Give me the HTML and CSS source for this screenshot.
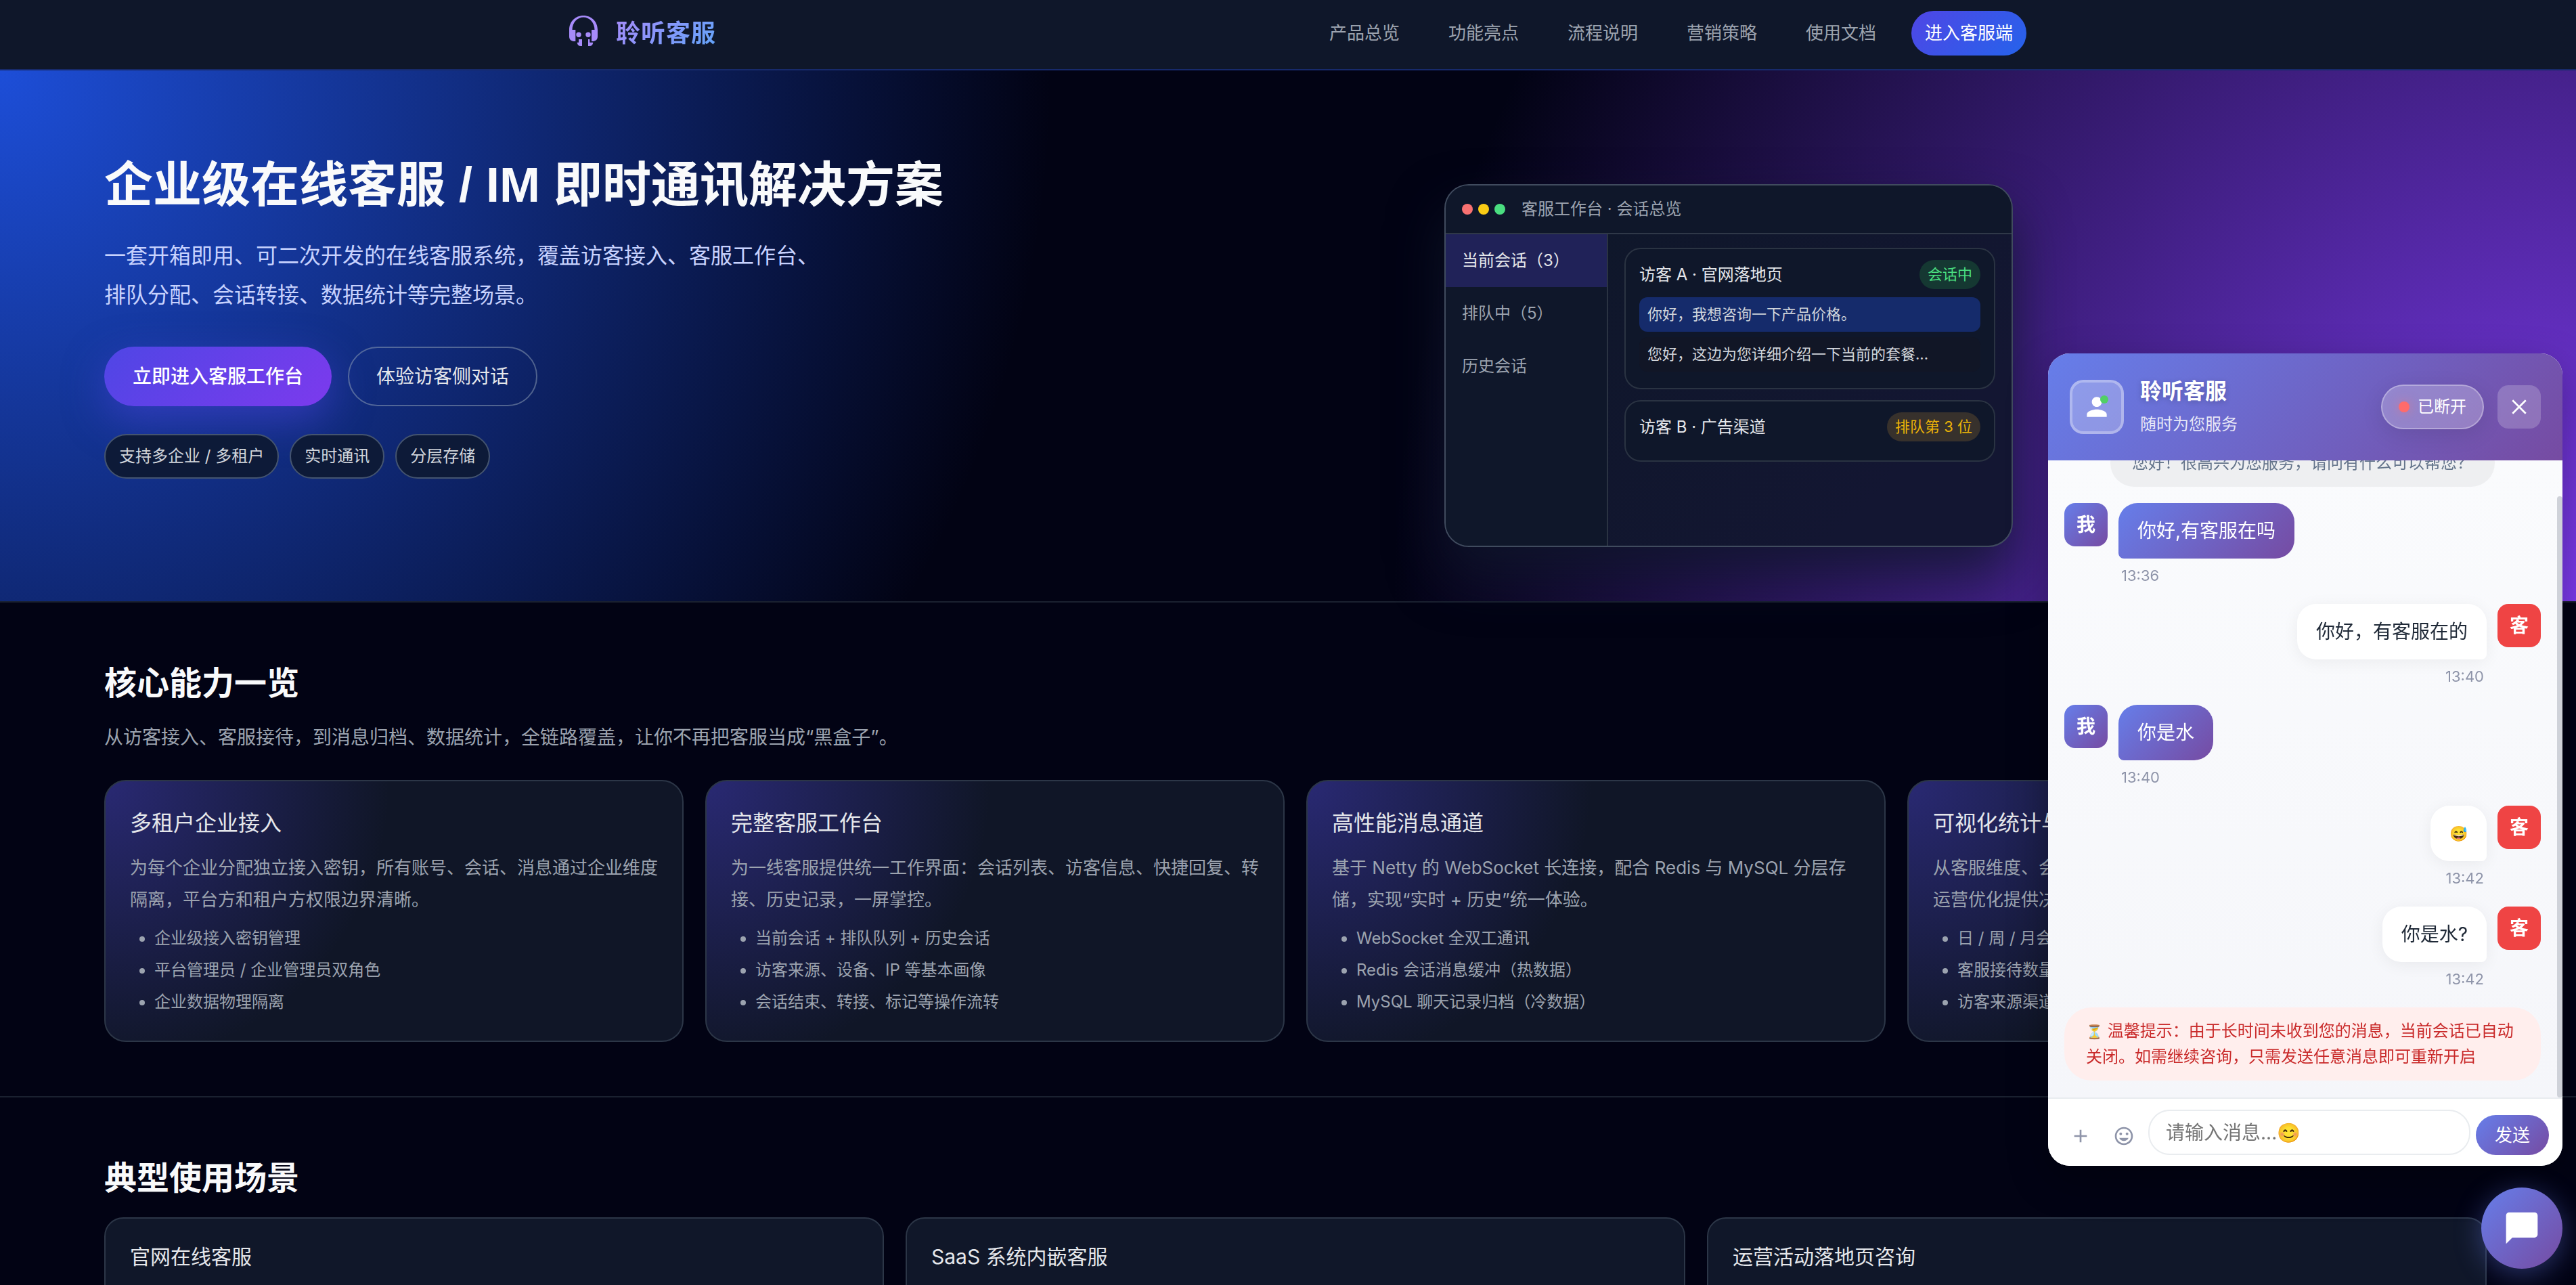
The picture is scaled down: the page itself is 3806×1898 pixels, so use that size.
FILE: index.html
```html
<!DOCTYPE html>
<html lang="zh-CN">
<head>
<meta charset="utf-8">
<title>聆听客服</title>
<link rel="stylesheet" href="styles.css">
</head>
<body>
<header class="topbar">
  <div class="topbar-inner">
    <a class="brand" href="#">
      <svg class="brand-icon" viewBox="-4 1 56 56" aria-hidden="true">
        <path d="M3 24C3 12 12 3 24 3S45 12 45 24V34C45 39 41 41 38 41H36V24H40.500C40.500 13.500 33 5.500 24 5.500S7.500 13.500 7.500 24H12.300V41H10C7 41 3 39 3 34Z"/>
        <circle cx="17" cy="31.300" r="3.700"/>
        <circle cx="31" cy="31.300" r="3.700"/>
        <path d="M22 38H17V42.700H14.700C15 46 17 48 20 48H22ZM31 38H33.300V42.700H38.300C38 46 36 48 33 48H31Z"/>
      </svg>
      <span class="brand-name">聆听客服</span>
    </a>
    <nav class="nav">
      <a href="#overview">产品总览</a>
      <a href="#features">功能亮点</a>
      <a href="#flow">流程说明</a>
      <a href="#marketing">营销策略</a>
      <a href="#docs">使用文档</a>
      <a class="nav-cta" href="#console">进入客服端</a>
    </nav>
  </div>
</header>

<main>
  <section class="hero" id="overview">
    <div class="container hero-grid">
      <div class="hero-copy">
        <h1>企业级在线客服 / IM 即时通讯解决方案</h1>
        <p class="hero-lead">一套开箱即用、可二次开发的在线客服系统，覆盖访客接入、客服工作台、<br>排队分配、会话转接、数据统计等完整场景。</p>
        <div class="hero-actions">
          <a class="btn btn-primary" href="#console">立即进入客服工作台</a>
          <a class="btn btn-outline" href="#visitor">体验访客侧对话</a>
        </div>
        <div class="tags">
          <span class="tag">支持多企业 / 多租户</span>
          <span class="tag">实时通讯</span>
          <span class="tag">分层存储</span>
        </div>
      </div>
      <div class="hero-visual">
        <div class="mock">
          <div class="mock-head">
            <div class="dots"><i class="dot dot-red"></i><i class="dot dot-yellow"></i><i class="dot dot-green"></i></div>
            <span>客服工作台 · 会话总览</span>
          </div>
          <div class="mock-body">
            <div class="mock-side">
              <div class="side-item side-active">当前会话（3）</div>
              <div class="side-item">排队中（5）</div>
              <div class="side-item">历史会话</div>
            </div>
            <div class="mock-main">
              <div class="talk">
                <div class="talk-head"><span>访客 A · 官网落地页</span><span class="badge badge-green">会话中</span></div>
                <div class="line line-in">你好，我想咨询一下产品价格。</div>
                <div class="line line-out">您好，这边为您详细介绍一下当前的套餐...</div>
              </div>
              <div class="talk">
                <div class="talk-head"><span>访客 B · 广告渠道</span><span class="badge badge-yellow">排队第 3 位</span></div>
              </div>
            </div>
          </div>
        </div>
      </div>
    </div>
  </section>

  <section class="section" id="features">
    <div class="container">
      <h2>核心能力一览</h2>
      <p class="section-sub">从访客接入、客服接待，到消息归档、数据统计，全链路覆盖，让你不再把客服当成“黑盒子”。</p>
      <div class="feature-grid">
        <article class="feature">
          <h3>多租户企业接入</h3>
          <p>为每个企业分配独立接入密钥，所有账号、会话、消息通过企业维度隔离，平台方和租户方权限边界清晰。</p>
          <ul><li>企业级接入密钥管理</li><li>平台管理员 / 企业管理员双角色</li><li>企业数据物理隔离</li></ul>
        </article>
        <article class="feature">
          <h3>完整客服工作台</h3>
          <p>为一线客服提供统一工作界面：会话列表、访客信息、快捷回复、转接、历史记录，一屏掌控。</p>
          <ul><li>当前会话 + 排队队列 + 历史会话</li><li>访客来源、设备、IP 等基本画像</li><li>会话结束、转接、标记等操作流转</li></ul>
        </article>
        <article class="feature">
          <h3>高性能消息通道</h3>
          <p>基于 Netty 的 WebSocket 长连接，配合 Redis 与 MySQL 分层存储，实现“实时 + 历史”统一体验。</p>
          <ul><li>WebSocket 全双工通讯</li><li>Redis 会话消息缓冲（热数据）</li><li>MySQL 聊天记录归档（冷数据）</li></ul>
        </article>
        <article class="feature">
          <h3>可视化统计与报表</h3>
          <p>从客服维度、会话维度、时间维度等多个视角提供数据报表，为后续运营优化提供决策依据。</p>
          <ul><li>日 / 周 / 月会话量</li><li>客服接待数量</li><li>访客来源渠道</li></ul>
        </article>
      </div>
    </div>
  </section>

  <section class="section" id="flow">
    <div class="container">
      <h2>典型使用场景</h2>
      <div class="scene-grid">
        <article class="scene"><h3>官网在线客服</h3></article>
        <article class="scene"><h3>SaaS 系统内嵌客服</h3></article>
        <article class="scene"><h3>运营活动落地页咨询</h3></article>
      </div>
    </div>
  </section>
</main>

<aside class="chat" aria-label="聆听客服">
  <div class="chat-head">
    <div class="chat-avatar">
      <svg viewBox="0 0 24 24" aria-hidden="true"><path d="M12 12c2.200 0 4-1.800 4-4s-1.800-4-4-4-4 1.800-4 4 1.800 4 4 4zm0 2c-2.700 0-8 1.300-8 4v2h16v-2c0-2.700-5.300-4-8-4z"/></svg>
      <i class="online"></i>
    </div>
    <div class="chat-title">
      <strong>聆听客服</strong>
      <span>随时为您服务</span>
    </div>
    <div class="status"><i class="status-dot"></i>已断开</div>
    <button class="chat-close" type="button" aria-label="关闭">
      <svg viewBox="0 0 24 24" aria-hidden="true"><path d="M3 3L21 21M21 3L3 21"/></svg>
    </button>
  </div>
  <div class="chat-body">
    <div class="notice">您好！很高兴为您服务，请问有什么可以帮您？</div>
    <div class="msg mine">
      <span class="face">我</span>
      <div class="msg-col"><div class="bubble">你好,有客服在吗</div><time>13:36</time></div>
    </div>
    <div class="msg agent">
      <span class="face">客</span>
      <div class="msg-col"><div class="bubble">你好，有客服在的</div><time>13:40</time></div>
    </div>
    <div class="msg mine">
      <span class="face">我</span>
      <div class="msg-col"><div class="bubble">你是水</div><time>13:40</time></div>
    </div>
    <div class="msg agent">
      <span class="face">客</span>
      <div class="msg-col"><div class="bubble bubble-emoji">😅</div><time>13:42</time></div>
    </div>
    <div class="msg agent">
      <span class="face">客</span>
      <div class="msg-col"><div class="bubble">你是水?</div><time>13:42</time></div>
    </div>
    <div class="notice warn"><span class="glass">⏳</span> 温馨提示：由于长时间未收到您的消息，当前会话已自动关闭。如需继续咨询，只需发送任意消息即可重新开启</div>
    <i class="thumb"></i>
  </div>
  <form class="chat-form">
    <button class="tool" type="button" aria-label="添加"><svg viewBox="0 0 24 24" aria-hidden="true"><path d="M19 13h-6v6h-2v-6H5v-2h6V5h2v6h6v2z"/></svg></button>
    <button class="tool" type="button" aria-label="表情"><svg viewBox="0 0 24 24" aria-hidden="true"><path d="M11.990 2C6.470 2 2 6.480 2 12s4.470 10 9.990 10C17.520 22 22 17.520 22 12S17.520 2 11.990 2zM12 20c-4.420 0-8-3.580-8-8s3.580-8 8-8 8 3.580 8 8-3.580 8-8 8zm3.500-9c.83 0 1.500-.67 1.500-1.500S16.330 8 15.500 8 14 8.670 14 9.500s.67 1.500 1.500 1.500zm-7 0c.83 0 1.500-.67 1.500-1.500S9.330 8 8.500 8 7 8.670 7 9.500 7.670 11 8.500 11zm3.500 6.500c2.330 0 4.310-1.460 5.110-3.500H6.890c.8 2.040 2.780 3.500 5.110 3.500z"/></svg></button>
    <input class="chat-input" type="text" aria-label="消息" placeholder="请输入消息...😊">
    <button class="send" type="submit">发送</button>
  </form>
</aside>
<button class="fab" type="button" aria-label="打开聊天">
  <svg viewBox="0 0 24 24" aria-hidden="true"><path d="M20 2H4c-1.100 0-2 .9-2 2v18l4-4h14c1.100 0 2-.9 2-2V4c0-1.100-.9-2-2-2z"/></svg>
</button>
</body>
</html>
```

FILE: styles.css
```css
* { box-sizing: border-box; margin: 0; padding: 0; }

body {
  height: 100vh;
  overflow: hidden;
  background: #020314;
  color: #e5e7eb;
  font-family: Inter, "Noto Sans CJK SC", sans-serif;
  font-size: 24px;
  line-height: 38px;
}

a { color: inherit; text-decoration: none; }
button, input { font: inherit; border: 0; }
h1, h2 { font-weight: 600; color: #f9fafb; }
h3 { font-weight: 400; color: #e5e7eb; }

/* top bar */
.topbar {
  padding: 16px 0 20px 22px;
  background: #0f172a;
  border-bottom: 2px solid #172a6b;
}
.topbar-inner {
  display: flex;
  justify-content: space-between;
  align-items: center;
  height: 66px;
  max-width: 2160px;
  margin: 0 auto;
}
.brand { display: flex; align-items: center; gap: 20px; }
.brand-icon { width: 56px; height: 56px; fill: #a78bfa; }
.brand-name {
  font-size: 36px;
  font-weight: 600;
  line-height: 56px;
  letter-spacing: 1px;
  background: linear-gradient(135deg, #a78bfa, #60a5fa);
  background-clip: text;
  color: transparent;
}
.nav { display: flex; gap: 32px; font-size: 26px; line-height: 42px; color: #9ca3af; }
.nav a { padding: 12px 20px; }
.nav .nav-cta {
  border-radius: 33px;
  background: linear-gradient(135deg, #4f46e5, #2563eb);
  color: #fff;
}

.container { max-width: 3520px; margin: 0 auto; }

/* hero */
.hero {
  padding: 124px 132px 80px 154px;
  background:
    radial-gradient(circle at top left, #1d4ed8 0, transparent 40%),
    radial-gradient(circle at bottom right, #7c3aed 0, transparent 45%),
    #020314;
}
.hero-grid { display: grid; grid-template-columns: 11fr 20fr; gap: 48px; }
.hero-copy { min-width: 0; }
.hero h1 {
  font-family: "Liberation Sans", "Noto Sans CJK SC", sans-serif;
  font-size: 72px;
  line-height: 90px;
  white-space: nowrap;
}
.hero-lead { margin-top: 31px; font-size: 32px; line-height: 58px; color: #c7d2fe; }
.hero-actions { display: flex; gap: 24px; margin-top: 47px; }
.btn {
  padding: 20px 40px;
  border: 2px solid transparent;
  border-radius: 44px;
  font-size: 28px;
  line-height: 44px;
}
.btn-primary {
  background: linear-gradient(135deg, #4f46e5, #7c3aed) border-box;
  box-shadow: 0 20px 60px rgba(79, 70, 229, .5);
  color: #fff;
  font-weight: 500;
}
.btn-outline { border-color: rgba(148, 163, 184, .5); }
.tags { display: flex; gap: 16px; margin-top: 41px; }
.tag {
  padding: 12px 20px;
  border: 2px solid #44546f;
  border-radius: 33px;
  background: #0d1a38;
  color: #d1d5db;
}

/* workbench preview */
.hero-visual { display: flex; justify-content: center; padding-top: 44px; }
.mock {
  display: flex;
  flex-direction: column;
  width: 840px;
  min-height: 536px;
  overflow: hidden;
  border: 2px solid #404b5e;
  border-radius: 36px;
  background: linear-gradient(135deg, #0f172a 20%, #131632 80%);
  box-shadow: 0 40px 80px rgba(15, 23, 42, .8);
}
.mock-head {
  display: flex;
  align-items: center;
  gap: 24px;
  height: 72px;
  padding: 0 24px;
  border-bottom: 2px solid #2f3848;
  background: #0f172a;
  color: #9ca3af;
}
.dots { display: flex; gap: 8px; }
.dot { width: 16px; height: 16px; border-radius: 50%; }
.dot-red { background: #f87171; }
.dot-yellow { background: #facc15; }
.dot-green { background: #4ade80; }
.mock-body { display: flex; flex: 1; }
.mock-side { width: 240px; border-right: 2px solid #2a3342; background: #0f172a; color: #9ca3af; }
.side-item { padding: 20px 24px; }
.side-active { background: #202258; color: #e5e7eb; }
.mock-main { display: flex; flex: 1; flex-direction: column; gap: 16px; padding: 20px 24px; }
.talk { padding: 16px 20px; border: 2px solid #2a3342; border-radius: 24px; background: #0f172a; }
.talk-head { display: flex; justify-content: space-between; align-items: center; margin-bottom: 12px; }
.badge { padding: 4px 12px; border-radius: 22px; font-size: 22px; line-height: 35px; }
.badge-green { background: #153832; color: #4ade80; }
.badge-yellow { background: #37312c; color: #eab308; }
.line {
  margin-bottom: 8px;
  padding: 8px 12px;
  border-radius: 12px;
  font-size: 22px;
  line-height: 35px;
  color: #d1d5db;
}
.line-in { background: #152b6b; }
.line-out { background: #111626; }

/* sections */
.section { padding: 80px 132px 80px 154px; border-top: 2px solid #1a2130; }
.section h2 { margin-bottom: 20px; font-size: 48px; line-height: 77px; }
.section-sub { margin-bottom: 40px; font-size: 28px; line-height: 45px; color: #9ca3af; }
.feature-grid { display: grid; grid-template-columns: repeat(4, 1fr); gap: 32px; }
.feature {
  padding: 36px;
  border: 2px solid #2c3647;
  border-radius: 32px;
  background: radial-gradient(circle at top left, rgba(79, 70, 229, .4), transparent 45%), #101627;
  color: #9ca3af;
}
.feature h3 { margin-bottom: 16px; font-size: 32px; line-height: 52px; }
.feature p { font-size: 26px; line-height: 47px; }
.feature ul { display: grid; gap: 4px; margin-top: 12px; padding-left: 36px; line-height: 43px; }
.scene-grid { display: grid; grid-template-columns: repeat(3, 1fr); gap: 32px; }
.scene {
  min-height: 320px;
  padding: 32px 36px;
  border: 2px solid #2c3647;
  border-radius: 28px;
  background: #101729;
}
.scene h3 { font-size: 30px; line-height: 48px; }

/* chat widget */
.chat {
  position: fixed;
  right: 20px;
  bottom: 176px;
  display: flex;
  flex-direction: column;
  width: 760px;
  height: 1200px;
  overflow: hidden;
  border-radius: 32px;
  background: #fff;
  box-shadow: 0 20px 60px rgba(0, 0, 0, .3);
}
.chat-head {
  display: flex;
  align-items: center;
  height: 158px;
  padding: 0 32px;
  background: linear-gradient(135deg, #667eea, #764ba2);
  color: #fff;
}
.chat-avatar {
  position: relative;
  display: grid;
  place-items: center;
  width: 80px;
  height: 80px;
  border: 4px solid rgba(255, 255, 255, .3);
  border-radius: 20px;
  background: rgba(255, 255, 255, .25);
}
.chat-avatar svg { width: 44px; height: 44px; fill: #fff; }
.online {
  position: absolute;
  top: 19px;
  right: 19px;
  width: 12px;
  height: 12px;
  border-radius: 50%;
  background: #51cf66;
}
.chat-title { display: flex; flex: 1; flex-direction: column; gap: 4px; margin-left: 24px; }
.chat-title strong { font-size: 32px; line-height: 48px; text-shadow: 0 2px 8px rgba(0, 0, 0, .2); }
.chat-title span { line-height: 42px; color: rgba(255, 255, 255, .85); }
.status {
  display: flex;
  align-items: center;
  gap: 12px;
  margin-right: 20px;
  padding: 12px 24px;
  border: 2px solid rgba(255, 255, 255, .3);
  border-radius: 33px;
  background: rgba(255, 255, 255, .25);
  box-shadow: 0 8px 32px rgba(0, 0, 0, .1);
}
.status-dot {
  width: 16px;
  height: 16px;
  border-radius: 50%;
  background: #ff6b6b;
  box-shadow: 0 0 16px rgba(255, 107, 107, .5);
}
.chat-close {
  display: grid;
  place-items: center;
  width: 64px;
  height: 64px;
  border-radius: 16px;
  background: rgba(255, 255, 255, .2);
}
.chat-close svg { width: 26px; height: 26px; fill: none; stroke: #fff; stroke-width: 2.500; }
.chat-body {
  position: relative;
  display: flex;
  flex: 1;
  flex-direction: column;
  justify-content: flex-end;
  gap: 24px;
  min-height: 0;
  overflow: hidden;
  padding: 24px 32px 25px 24px;
  background: linear-gradient(#fafbfd, #f5f6fa);
}
.notice {
  align-self: center;
  flex: none;
  padding: 16px 32px;
  border-radius: 40px;
  background: #eeeff1;
  color: #64748b;
}
.warn { align-self: stretch; background: #ffeeed; color: #c92a2a; }
.glass { font-size: 20px; line-height: 24px; }
.msg { display: flex; flex: none; align-items: flex-start; gap: 16px; }
.agent { flex-direction: row-reverse; }
.face {
  width: 64px;
  border-radius: 16px;
  font-size: 28px;
  font-weight: 700;
  line-height: 64px;
  text-align: center;
  color: #fff;
}
.mine .face, .mine .bubble, .send { background: linear-gradient(135deg, #667eea, #764ba2); }
.agent .face { background: #ef4444; }
.msg-col { display: flex; flex-direction: column; align-items: flex-start; gap: 8px; }
.agent .msg-col { align-items: flex-end; }
.bubble {
  padding: 20px 28px;
  border-radius: 28px 28px 28px 8px;
  font-size: 28px;
  line-height: 42px;
  color: #fff;
}
.agent .bubble {
  border-radius: 28px 28px 8px 28px;
  background: #fff;
  box-shadow: 0 4px 24px rgba(0, 0, 0, .06);
  color: #1f2937;
}
.bubble-emoji { font-size: 22px; }
.msg time { padding: 0 4px; font-size: 22px; line-height: 35px; color: #8e94a9; }
.thumb {
  position: absolute;
  top: 53px;
  right: 0;
  bottom: 0;
  width: 8px;
  border-radius: 4px;
  background: #cfd2d9;
}
.chat-form {
  display: flex;
  align-items: flex-end;
  gap: 8px;
  padding: 16px 20px;
  border-top: 2px solid #e9ecef;
  background: #fff;
}
.tool { display: grid; place-items: center; width: 56px; height: 56px; background: none; }
.tool svg { width: 32px; height: 32px; fill: #8e94a9; }
.chat-input {
  flex: 1;
  min-width: 0;
  height: 67px;
  padding: 0 24px;
  border: 2px solid #e9ecef;
  border-radius: 32px;
  background: #fff;
  font-size: 28px;
}
.chat-input::placeholder { color: #757575; }
.send { padding: 8px 28px; border-radius: 30px; font-size: 26px; line-height: 43px; color: #fff; }

.fab {
  position: fixed;
  right: 20px;
  bottom: 24px;
  display: grid;
  place-items: center;
  width: 120px;
  height: 120px;
  border-radius: 50%;
  background: linear-gradient(135deg, #667eea, #764ba2);
  box-shadow: 0 8px 40px rgba(102, 126, 234, .4);
}
.fab svg { width: 56px; height: 56px; fill: #fff; }
```
